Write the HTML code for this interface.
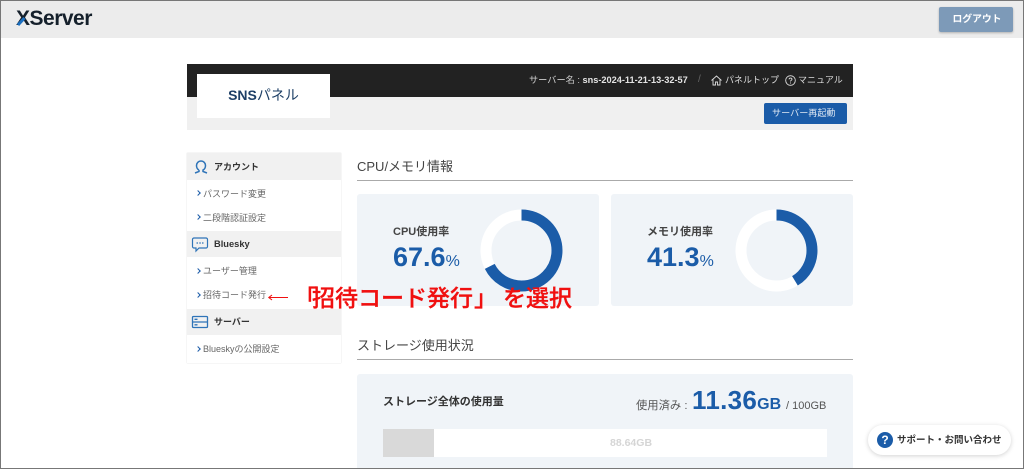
<!DOCTYPE html>
<html lang="ja"><head><meta charset="utf-8"><title>XServer SNS Panel</title>
<style>
html,body{margin:0;padding:0;background:#fff}
body{width:1024px;height:469px;position:relative;overflow:hidden;font-family:"Liberation Sans","Noto Sans CJK JP",sans-serif;color:#444}
.a{position:absolute;white-space:nowrap}
.t{position:absolute;white-space:nowrap;line-height:1}
.c{position:absolute;left:196px;width:3px;height:3px;border-top:1.3px solid #1b5ca8;border-right:1.3px solid #1b5ca8;transform:rotate(45deg)}
.m{left:203px;font-size:9px;color:#666}
.h{left:214px;font-size:9px;font-weight:700;color:#333}
.r{font-size:23px;font-weight:500;color:#f01010;-webkit-text-stroke:.3px #f01010;top:287px}
svg{position:absolute;overflow:visible}
</style></head><body>
<div class="a" style="left:0;top:0;width:1024px;height:38px;background:#ececec"></div>
<div class="t" style="left:16px;top:8px;font-size:21px;font-weight:700;color:#15202b;letter-spacing:-.5px">XServer</div>
<svg style="left:0;top:0" width="40" height="38" fill="none"><path d="M18 25 24.500 18" stroke="#1b6fc0" stroke-width="3"/></svg>
<div class="a" style="left:939px;top:7px;width:74px;height:25px;background:#7d9ab8;border-radius:2px;box-shadow:0 1px 2px rgba(0,0,0,.25)"></div>
<div class="t" style="left:940px;top:15px;width:74px;text-align:center;font-size:9.800px;font-weight:700;color:#fff">ログアウト</div>

<div class="a" style="left:187px;top:64px;width:666px;height:33px;background:#222"></div>
<div class="a" style="left:187px;top:97px;width:666px;height:33px;background:#f0f0f0"></div>
<div class="a" style="left:197px;top:74px;width:133px;height:43.500px;background:#fff"></div>
<div class="t" style="left:197px;top:88px;width:133px;text-align:center;font-size:14px;color:#1d3f66"><b>SNS</b>パネル</div>
<div class="t" style="left:529px;top:76px;font-size:9.200px;color:#ccc">サーバー名 : <b style="color:#e4e4e4">sns-2024-11-21-13-32-57</b></div>
<div class="t" style="left:698px;top:75px;font-size:10px;color:#666">/</div>
<svg style="left:711px;top:75px" width="11" height="11" viewBox="0 0 11 11" fill="none" stroke="#ddd" stroke-width=".9"><path d="M.5 5.500 5.500 1l5 4.500M2 4.500V10h2.500V7h2v3H9V4.500"/></svg>
<div class="t" style="left:725px;top:76px;font-size:9px;color:#ddd">パネルトップ</div>
<svg style="left:785px;top:75px" width="11" height="11" viewBox="0 0 11 11" fill="none" stroke="#ddd" stroke-width=".9"><circle cx="5.500" cy="5.500" r="4.800"/><path d="M4 4.300c.2-1.700 3-1.700 3 0 0 1-1.500 1-1.500 2.200M5.500 7.500v1"/></svg>
<div class="t" style="left:798px;top:76px;font-size:9px;color:#ddd">マニュアル</div>
<div class="a" style="left:764px;top:103px;width:83px;height:21px;background:#1b5ca8;border-radius:2px"></div>
<div class="t" style="left:772px;top:109px;font-size:9.100px;color:#dfe8f3">サーバー再起動</div>

<div class="a" style="left:187px;top:153px;width:154px;height:210px;background:#fff;box-shadow:0 0 1px rgba(0,0,0,.2)"></div>
<div class="a" style="left:187px;top:153px;width:154px;height:27px;background:#f1f1f1"></div>
<div class="a" style="left:187px;top:231px;width:154px;height:26px;background:#f1f1f1"></div>
<div class="a" style="left:187px;top:309px;width:154px;height:26px;background:#f1f1f1"></div>

<svg style="left:194px;top:160px" width="14" height="15" viewBox="0 0 14 15" fill="none" stroke="#2f74b8" stroke-width="1.500"><path d="M5 10C3 9 2.500 7 2.500 5.500 2.500 3 4.500 1 7 1s4.500 2 4.500 4.500C11.500 7 11 9 9 10v1.500l4 1.500M5 10v1.500L1 13"/></svg>
<svg style="left:192px;top:237px" width="16" height="15" viewBox="0 0 16 15" fill="none" stroke="#2f74b8" stroke-width="1.200"><path d="M2 1h12a1.500 1.500 0 0 1 1.500 1.500v7A1.500 1.500 0 0 1 14 11H7l-3 3v-3H2A1.500 1.500 0 0 1 .5 9.500v-7A1.500 1.500 0 0 1 2 1z"/><path d="M4.500 6h1.500M7.300 6h1.500M10 6h1.500" stroke-width="1.200"/></svg>
<svg style="left:192px;top:316px" width="16" height="12" viewBox="0 0 16 12" fill="none" stroke="#2f74b8" stroke-width="1.300"><rect x=".5" y=".5" width="15" height="11" rx="1"/><path d="M.5 6h15M2.500 3.300h3M2.500 8.800h3"/></svg>

<div class="t h" style="top:163px">アカウント</div>
<div class="t h" style="top:240px;font-size:9.300px">Bluesky</div>
<div class="t h" style="top:318px">サーバー</div>

<div class="c" style="top:191px"></div><div class="t m" style="top:190px">パスワード変更</div>
<div class="c" style="top:215px"></div><div class="t m" style="top:214px">二段階認証設定</div>
<div class="c" style="top:269px"></div><div class="t m" style="top:267px">ユーザー管理</div>
<div class="c" style="top:293px"></div><div class="t m" style="top:291px">招待コード発行</div>
<div class="c" style="top:347px"></div><div class="t m" style="top:345px">Blueskyの公開設定</div>

<div class="t" style="left:357px;top:160px;font-size:13px;color:#444">CPU/メモリ情報</div>
<div class="a" style="left:357px;top:180px;width:496px;height:1px;background:#aaa"></div>

<div class="a" style="left:357px;top:194px;width:242px;height:112px;background:#f0f4f8;border-radius:3px"></div>
<div class="a" style="left:611px;top:194px;width:242px;height:112px;background:#f0f4f8;border-radius:3px"></div>
<div class="t" style="left:393px;top:227px;font-size:11px;font-weight:700;color:#444">CPU使用率</div>
<div class="t" style="left:393px;top:244px;font-size:27px;font-weight:700;color:#1b5ca8">67.6<span style="font-size:16px;font-weight:400">%</span></div>
<svg style="left:480px;top:209px" width="83" height="83" viewBox="0 0 83 83" fill="none"><circle cx="41.500" cy="41.500" r="35.500" stroke="#fff" stroke-width="11"/><circle cx="41.500" cy="41.500" r="35.500" stroke="#1b5ca8" stroke-width="11" pathLength="100" stroke-dasharray="67.600 100" transform="rotate(-90 41.500 41.500)"/></svg>

<div class="t" style="left:647px;top:227px;font-size:11px;font-weight:700;color:#444">メモリ使用率</div>
<div class="t" style="left:647px;top:244px;font-size:27px;font-weight:700;color:#1b5ca8">41.3<span style="font-size:16px;font-weight:400">%</span></div>
<svg style="left:735px;top:209px" width="83" height="83" viewBox="0 0 83 83" fill="none"><circle cx="41.500" cy="41.500" r="35.500" stroke="#fff" stroke-width="11"/><circle cx="41.500" cy="41.500" r="35.500" stroke="#1b5ca8" stroke-width="11" pathLength="100" stroke-dasharray="41.300 100" transform="rotate(-90 41.500 41.500)"/></svg>

<div class="t" style="left:357px;top:339px;font-size:13px;color:#444">ストレージ使用状況</div>
<div class="a" style="left:357px;top:359px;width:496px;height:1px;background:#aaa"></div>

<div class="a" style="left:357px;top:374px;width:496px;height:95px;background:#f0f4f8;border-radius:3px 3px 0 0"></div>
<div class="t" style="left:383px;top:397px;font-size:11px;font-weight:700;color:#333">ストレージ全体の使用量</div>
<div class="t" style="left:636px;top:401px;font-size:11.300px;color:#555">使用済み :</div>
<div class="t" style="left:692px;top:387px;font-size:26px;font-weight:700;color:#1b5ca8;letter-spacing:.3px">11.36<span style="font-size:16px;letter-spacing:0">GB</span></div>
<div class="t" style="left:786px;top:401px;font-size:11px;color:#555">/ 100GB</div>
<div class="a" style="left:383px;top:429px;width:444px;height:28px;background:#fff"></div>
<div class="a" style="left:383px;top:429px;width:51px;height:28px;background:#d9d9d9"></div>
<div class="t" style="left:610px;top:438px;font-size:10.500px;font-weight:700;color:#d5d5d5">88.64GB</div>

<svg style="left:268px;top:294px" width="20" height="7" viewBox="0 0 20 7" fill="none" stroke="#f01010" stroke-width="1.100"><path d="M0.500 3.500H20M4 1 .8 3.500 4 6"/></svg>
<div class="t r" style="left:294px">「</div>
<div class="t r" style="left:312px">招待コード発行</div>
<div class="t r" style="left:474px">」</div>
<div class="t r" style="left:503px">を選択</div>

<div class="a" style="left:868px;top:425px;width:143px;height:30px;background:#fff;border-radius:15px;box-shadow:0 1px 5px rgba(0,0,0,.18)"></div>
<div class="a" style="left:877px;top:432px;width:16px;height:16px;border-radius:50%;background:#1b5ca8;color:#fff;font-size:12px;font-weight:700;line-height:16px;text-align:center">?</div>
<div class="t" style="left:897px;top:436px;font-size:9.500px;font-weight:700;color:#333">サポート・お問い合わせ</div>

<div class="a" style="left:0;top:0;width:1022px;height:467px;border:1px solid #777;pointer-events:none"></div>
</body></html>
